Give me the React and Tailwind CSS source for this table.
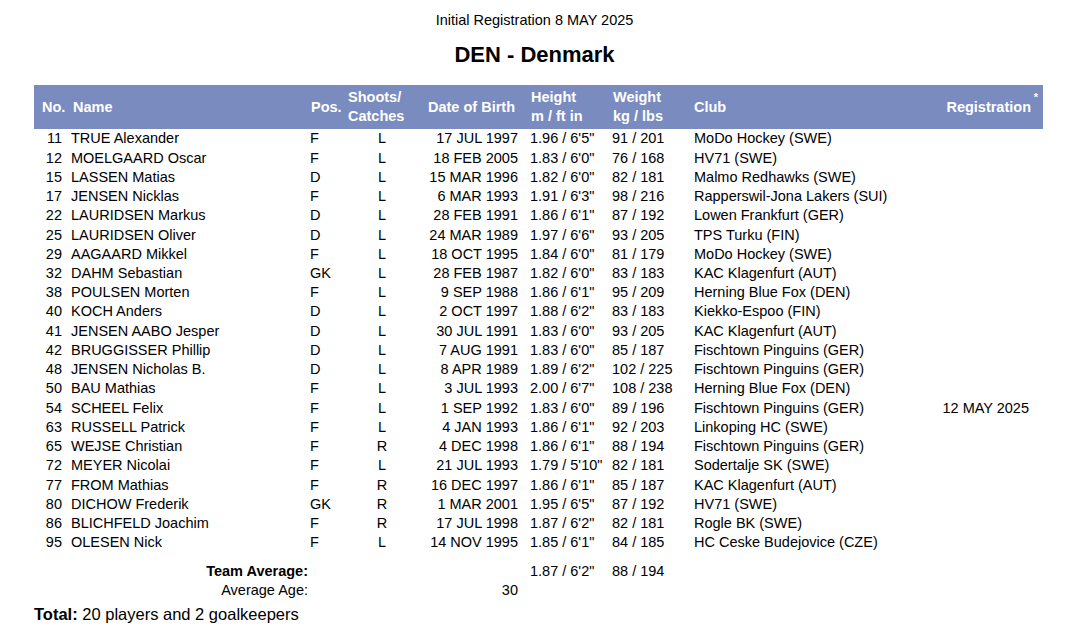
const players = [
  ["11", "TRUE Alexander", "F", "L", "17 JUL 1997", "1.96 / 6'5\"", "91 / 201", "MoDo Hockey (SWE)", ""],
  ["12", "MOELGAARD Oscar", "F", "L", "18 FEB 2005", "1.83 / 6'0\"", "76 / 168", "HV71 (SWE)", ""],
  ["15", "LASSEN Matias", "D", "L", "15 MAR 1996", "1.82 / 6'0\"", "82 / 181", "Malmo Redhawks (SWE)", ""],
  ["17", "JENSEN Nicklas", "F", "L", "6 MAR 1993", "1.91 / 6'3\"", "98 / 216", "Rapperswil-Jona Lakers (SUI)", ""],
  ["22", "LAURIDSEN Markus", "D", "L", "28 FEB 1991", "1.86 / 6'1\"", "87 / 192", "Lowen Frankfurt (GER)", ""],
  ["25", "LAURIDSEN Oliver", "D", "L", "24 MAR 1989", "1.97 / 6'6\"", "93 / 205", "TPS Turku (FIN)", ""],
  ["29", "AAGAARD Mikkel", "F", "L", "18 OCT 1995", "1.84 / 6'0\"", "81 / 179", "MoDo Hockey (SWE)", ""],
  ["32", "DAHM Sebastian", "GK", "L", "28 FEB 1987", "1.82 / 6'0\"", "83 / 183", "KAC Klagenfurt (AUT)", ""],
  ["38", "POULSEN Morten", "F", "L", "9 SEP 1988", "1.86 / 6'1\"", "95 / 209", "Herning Blue Fox (DEN)", ""],
  ["40", "KOCH Anders", "D", "L", "2 OCT 1997", "1.88 / 6'2\"", "83 / 183", "Kiekko-Espoo (FIN)", ""],
  ["41", "JENSEN AABO Jesper", "D", "L", "30 JUL 1991", "1.83 / 6'0\"", "93 / 205", "KAC Klagenfurt (AUT)", ""],
  ["42", "BRUGGISSER Phillip", "D", "L", "7 AUG 1991", "1.83 / 6'0\"", "85 / 187", "Fischtown Pinguins (GER)", ""],
  ["48", "JENSEN Nicholas B.", "D", "L", "8 APR 1989", "1.89 / 6'2\"", "102 / 225", "Fischtown Pinguins (GER)", ""],
  ["50", "BAU Mathias", "F", "L", "3 JUL 1993", "2.00 / 6'7\"", "108 / 238", "Herning Blue Fox (DEN)", ""],
  ["54", "SCHEEL Felix", "F", "L", "1 SEP 1992", "1.83 / 6'0\"", "89 / 196", "Fischtown Pinguins (GER)", "12 MAY 2025"],
  ["63", "RUSSELL Patrick", "F", "L", "4 JAN 1993", "1.86 / 6'1\"", "92 / 203", "Linkoping HC (SWE)", ""],
  ["65", "WEJSE Christian", "F", "R", "4 DEC 1998", "1.86 / 6'1\"", "88 / 194", "Fischtown Pinguins (GER)", ""],
  ["72", "MEYER Nicolai", "F", "L", "21 JUL 1993", "1.79 / 5'10\"", "82 / 181", "Sodertalje SK (SWE)", ""],
  ["77", "FROM Mathias", "F", "R", "16 DEC 1997", "1.86 / 6'1\"", "85 / 187", "KAC Klagenfurt (AUT)", ""],
  ["80", "DICHOW Frederik", "GK", "R", "1 MAR 2001", "1.95 / 6'5\"", "87 / 192", "HV71 (SWE)", ""],
  ["86", "BLICHFELD Joachim", "F", "R", "17 JUL 1998", "1.87 / 6'2\"", "82 / 181", "Rogle BK (SWE)", ""],
  ["95", "OLESEN Nick", "F", "L", "14 NOV 1995", "1.85 / 6'1\"", "84 / 185", "HC Ceske Budejovice (CZE)", ""],
];

const cols = "grid grid-cols-[32px_242px_38px_72px_102px_86px_82px_242px_113px]";

function Row({ p }) {
  return (
    <div className={`${cols} h-[19.24px] items-center whitespace-nowrap leading-none`}>
      <div className="text-right pr-[4px]">{p[0]}</div>
      <div className="pl-[5px]">{p[1]}</div>
      <div className="pl-[2px]">{p[2]}</div>
      <div className="text-center">{p[3]}</div>
      <div className="text-right pr-[2px]">{p[4]}</div>
      <div className="pl-[10px]">{p[5]}</div>
      <div className="pl-[6px]">{p[6]}</div>
      <div className="pl-[6px]">{p[7]}</div>
      <div className="text-right pr-[14px]">{p[8]}</div>
    </div>
  );
}

export default function App() {
  return (
    <div
      className="w-[1069px] h-[636px] bg-white text-black overflow-hidden text-[14.5px]"
      style={{ fontFamily: '"Liberation Sans", Arial, sans-serif' }}
    >
      <div className="pt-[12px] text-center leading-[17px]">Initial Registration 8 MAY 2025</div>
      <div className="mt-[13px] text-center font-bold text-[22px] leading-[26px]">DEN - Denmark</div>
      <div className="mt-[17px] ml-[34px] w-[1009px]">
        <div className={`${cols} h-[44px] bg-[#7a8bbf] text-white font-bold items-center whitespace-nowrap leading-[19px]`}>
          <div className="pl-[8px]">No.</div>
          <div className="pl-[7px]">Name</div>
          <div className="pl-[3px]">Pos.</div>
          <div className="pl-[2px] flex flex-col">
            <span>Shoots/</span>
            <span>Catches</span>
          </div>
          <div className="text-right pr-[5px]">Date of Birth</div>
          <div className="pl-[11px] flex flex-col">
            <span>Height</span>
            <span>m / ft in</span>
          </div>
          <div className="pl-[7px] flex flex-col">
            <span>Weight</span>
            <span>kg / lbs</span>
          </div>
          <div className="pl-[6px]">Club</div>
          <div className="text-right pr-[12px]">
            <span className="relative">
              Registration
              <span className="absolute -right-[7px] -top-[11px] text-[11px]">*</span>
            </span>
          </div>
        </div>
        {players.map((p) => (
          <Row key={p[0]} p={p} />
        ))}
        <div className={`${cols} h-[19.24px] mt-[9px] items-center whitespace-nowrap leading-none`}>
          <div className="col-span-2 text-right font-bold">Team Average:</div>
          <div></div>
          <div></div>
          <div></div>
          <div className="pl-[10px]">1.87 / 6'2"</div>
          <div className="pl-[6px]">88 / 194</div>
          <div></div>
          <div></div>
        </div>
        <div className={`${cols} h-[19.24px] items-center whitespace-nowrap leading-none`}>
          <div className="col-span-2 text-right">Average Age:</div>
          <div></div>
          <div></div>
          <div className="text-right pr-[2px]">30</div>
          <div></div>
          <div></div>
          <div></div>
          <div></div>
        </div>
      </div>
      <div className="mt-[5px] ml-[34px] text-[16.5px] leading-[19px] whitespace-nowrap">
        <span className="font-bold">Total:</span> 20 players and 2 goalkeepers
      </div>
    </div>
  );
}
